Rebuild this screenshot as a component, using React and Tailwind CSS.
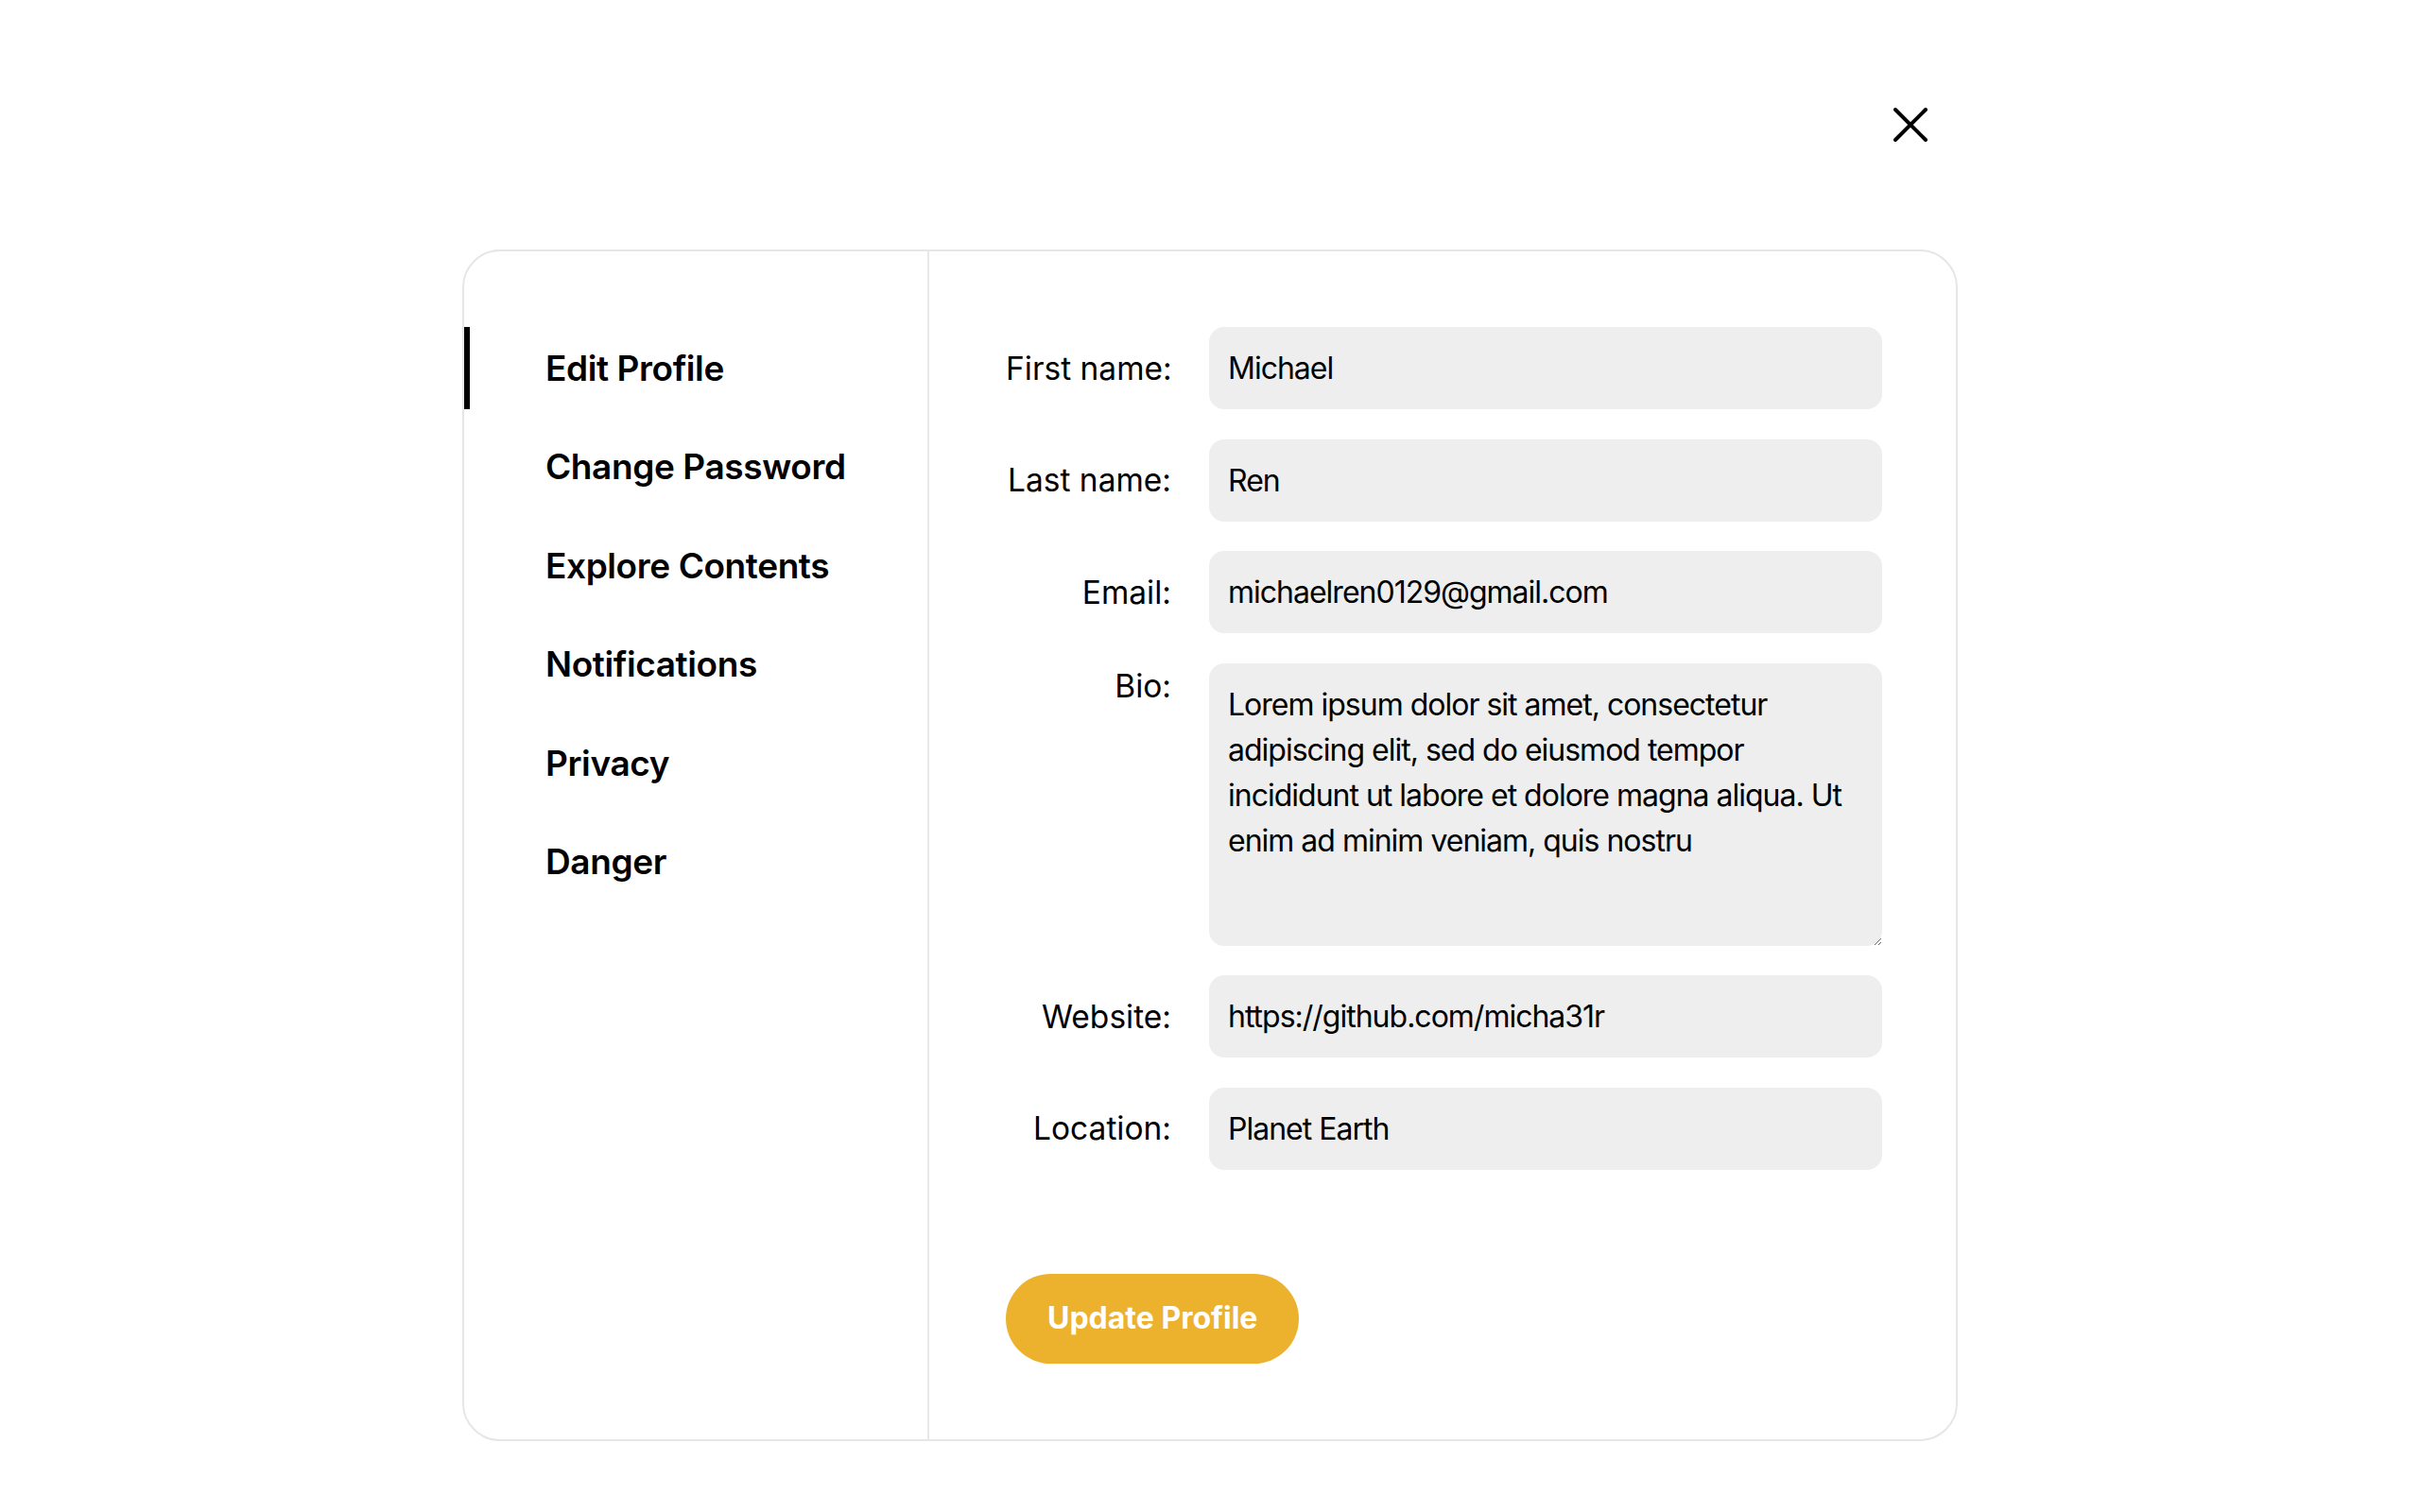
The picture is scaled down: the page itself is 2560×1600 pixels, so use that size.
import { useState } from "react";

const NAV_ITEMS = [
  "Edit Profile",
  "Change Password",
  "Explore Contents",
  "Notifications",
  "Privacy",
  "Danger",
];

const BIO =
  "Lorem ipsum dolor sit amet, consectetur adipiscing elit, sed do eiusmod tempor incididunt ut labore et dolore magna aliqua. Ut enim ad minim veniam, quis nostru";

function Field({ label, value }) {
  return (
    <div className="flex items-center gap-[40px]">
      <label className="w-[175px] shrink-0 whitespace-nowrap text-right text-[33.5px] leading-[48px] text-black">
        {label}
      </label>
      <input
        defaultValue={value}
        className="h-[87px] w-[712px] rounded-[16px] bg-[#eeeeee] px-[20px] text-[32px] tracking-[-1px] text-black outline-none"
      />
    </div>
  );
}

function App() {
  const [active, setActive] = useState("Edit Profile");

  return (
    <div className="flex min-h-screen justify-center bg-white font-['Inter','Liberation_Sans',sans-serif] text-black">
      <div className="w-[1582px] pt-[114px]">
        {/* Close */}
        <div className="flex justify-end pr-[32px]">
          <button className="h-[36px] w-[36px]">
            <svg width="36" height="36" viewBox="0 0 36 36" fill="none">
              <path d="M2 2L34 34M34 2L2 34" stroke="#000" strokeWidth="4" strokeLinecap="round" />
            </svg>
          </button>
        </div>

        {/* Card */}
        <div className="mt-[114px] flex rounded-[40px] border-2 border-[#e6e6e6]">
          <nav className="flex w-[492px] shrink-0 flex-col gap-[17.5px] border-r-2 border-[#e8e8e8] pt-[80px]">
            {NAV_ITEMS.map((item) => (
              <button
                key={item}
                onClick={() => setActive(item)}
                className="relative flex h-[87px] items-center pl-[86px] text-left text-[37px] font-semibold tracking-[-0.4px] text-black"
              >
                {active === item && (
                  <span className="absolute left-0 top-0 h-full w-[6px] bg-black" />
                )}
                {item}
              </button>
            ))}
          </nav>

          <form className="flex flex-1 flex-col pb-[80px] pl-[81px] pr-[79px] pt-[80px]">
            <div className="flex flex-col gap-[31.5px]">
              <Field label="First name:" value="Michael" />
              <Field label="Last name:" value="Ren" />
              <Field label="Email:" value="michaelren0129@gmail.com" />
              <div className="flex items-start gap-[40px]">
                <label className="w-[175px] shrink-0 text-right text-[33.5px] leading-[48px] text-black">
                  Bio:
                </label>
                <textarea
                  defaultValue={BIO}
                  className="h-[299px] w-[712px] rounded-[16px] bg-[#eeeeee] py-[20px] pl-[20px] pr-[12px] text-[32px] leading-[48px] tracking-[-1px] text-black outline-none"
                />
              </div>
              <Field label="Website:" value="https://github.com/micha31r" />
              <Field label="Location:" value="Planet Earth" />
            </div>

            <div className="mt-[110px]">
              <button
                type="button"
                className="h-[95px] rounded-full bg-[#ecb22e] px-[44px] text-[32px] font-bold text-white"
              >
                Update Profile
              </button>
            </div>
          </form>
        </div>
      </div>
    </div>
  );
}

export default App;
